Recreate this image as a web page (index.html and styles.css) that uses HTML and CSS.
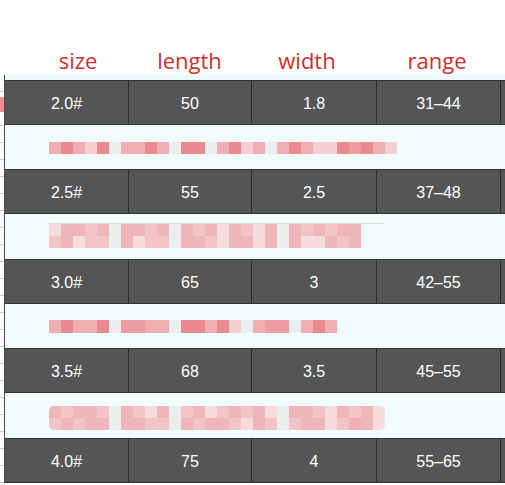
FILE: index.html
```html
<!DOCTYPE html>
<html>
<head>
<meta charset="utf-8">
<link rel="stylesheet" href="styles.css">
</head>
<body>
<div class="page">
  <div class="head">
    <span class="h h-size">size</span>
    <span class="h h-length">length</span>
    <span class="h h-width">width</span>
    <span class="h h-range">range</span>
  </div>
  <div class="body">
    <div class="gutter"><div class="mark"></div></div>
    <div class="table">
      <div class="strip"></div>
      <div class="row dark"><div class="cell">2.0#</div><div class="cell">50</div><div class="cell">1.8</div><div class="cell">31–44</div><div class="cell last"></div></div>
      <div class="row light l44">
        <div class="mos m1">
          <div class="line"><i class="a"></i><i class="b"></i><i class="a"></i><i class="c"></i><i class="b"></i><i class="g"></i><i class="a"></i><i class="a"></i><i class="b"></i><i class="a"></i><i class="g"></i><i class="b"></i><i class="b"></i><i class="g"></i><i class="a"></i><i class="b"></i><i class="c"></i><i class="a"></i><i class="g"></i><i class="a"></i><i class="b"></i><i class="a"></i><i class="c"></i><i class="c"></i><i class="b"></i><i class="d"></i><i class="b"></i><i class="a"></i><i class="c"></i></div>
        </div>
      </div>
      <div class="row dark"><div class="cell">2.5#</div><div class="cell">55</div><div class="cell">2.5</div><div class="cell">37–48</div><div class="cell last"></div></div>
      <div class="row light l45">
        <div class="mos m2">
          <div class="line"><i class="p3"></i><i class="p2"></i><i class="p2"></i><i class="p1"></i><i class="p2"></i><i class="g"></i><i class="p2"></i><i class="p2"></i><i class="p1"></i><i class="p2"></i><i class="g"></i><i class="p2"></i><i class="p1"></i><i class="p2"></i><i class="p3"></i><i class="p2"></i><i class="p1"></i><i class="p3"></i><i class="p2"></i><i class="g"></i><i class="p2"></i><i class="p1"></i><i class="p2"></i><i class="p1"></i><i class="p2"></i><i class="p2"></i></div>
          <div class="line"><i class="p1"></i><i class="p2"></i><i class="p3"></i><i class="p1"></i><i class="p1"></i><i class="g"></i><i class="p2"></i><i class="p3"></i><i class="p1"></i><i class="p1"></i><i class="g"></i><i class="p2"></i><i class="p2"></i><i class="p1"></i><i class="p3"></i><i class="p2"></i><i class="p2"></i><i class="p3"></i><i class="p2"></i><i class="g"></i><i class="p2"></i><i class="p3"></i><i class="p3"></i><i class="p2"></i><i class="p1"></i><i class="p2"></i></div>
        </div>
      </div>
      <div class="row dark"><div class="cell">3.0#</div><div class="cell">65</div><div class="cell">3</div><div class="cell">42–55</div><div class="cell last"></div></div>
      <div class="row light l44">
        <div class="mos m3">
          <div class="line"><i class="a"></i><i class="b"></i><i class="a"></i><i class="a"></i><i class="b"></i><i class="g"></i><i class="d"></i><i class="d"></i><i class="a"></i><i class="a"></i><i class="g"></i><i class="b"></i><i class="b"></i><i class="a"></i><i class="b"></i><i class="c"></i><i class="g"></i><i class="a"></i><i class="d"></i><i class="d"></i><i class="g"></i><i class="a"></i><i class="b"></i><i class="a"></i></div>
        </div>
      </div>
      <div class="row dark"><div class="cell">3.5#</div><div class="cell">68</div><div class="cell">3.5</div><div class="cell">45–55</div><div class="cell last"></div></div>
      <div class="row light l45">
        <div class="mos m4">
          <div class="line"><i class="p2"></i><i class="p1"></i><i class="p2"></i><i class="p2"></i><i class="p1"></i><i class="g"></i><i class="p2"></i><i class="p1"></i><i class="p3"></i><i class="p2"></i><i class="g"></i><i class="p1"></i><i class="p2"></i><i class="p3"></i><i class="p1"></i><i class="p2"></i><i class="p1"></i><i class="p2"></i><i class="p3"></i><i class="g"></i><i class="p2"></i><i class="p2"></i><i class="p1"></i><i class="p3"></i><i class="p2"></i><i class="p1"></i><i class="p2"></i><i class="p3"></i></div>
          <div class="line"><i class="p1"></i><i class="p2"></i><i class="p1"></i><i class="p2"></i><i class="p2"></i><i class="g"></i><i class="p2"></i><i class="p2"></i><i class="p1"></i><i class="p1"></i><i class="g"></i><i class="p2"></i><i class="p1"></i><i class="p2"></i><i class="p2"></i><i class="p1"></i><i class="p3"></i><i class="p2"></i><i class="p1"></i><i class="g"></i><i class="p1"></i><i class="p2"></i><i class="p2"></i><i class="p3"></i><i class="p1"></i><i class="a"></i><i class="p2"></i><i class="p3"></i></div>
        </div>
      </div>
      <div class="row dark"><div class="cell">4.0#</div><div class="cell">75</div><div class="cell">4</div><div class="cell">55–65</div><div class="cell last"></div></div>
    </div>
  </div>
</div>
</body>
</html>
```
FILE: styles.css
```css
html, body {
  margin: 0;
  padding: 0;
  background: #ffffff;
}
.page {
  width: 505px;
  height: 485px;
  overflow: hidden;
}
.head {
  height: 75px;
  box-sizing: border-box;
  padding: 45px 0 0 5px;
  display: grid;
  grid-template-columns: 124px 123px 125px 124px 1fr;
  font-family: "Open Sans", "Liberation Sans", sans-serif;
  font-size: 22px;
  line-height: 30px;
  color: #c8322b;
}
.h {
  text-align: center;
}
.h-size { padding-left: 22px; }
.h-length { padding-right: 2px; }
.h-width { padding-right: 15px; }
.h-range { padding-right: 4px; }

.body {
  display: flex;
}
.gutter {
  width: 4px;
  flex: none;
  background: repeating-linear-gradient(to bottom, transparent 0 16px, #c9cccc 16px 17px);
  display: flex;
  flex-direction: column;
}
.mark {
  margin-top: 22px;
  height: 15px;
  background: #ef8d92;
}
.table {
  flex: 1;
  border-left: 1px solid #4a4a4a;
}
.strip {
  height: 5px;
  background: #eef9f9;
}
.row {
  box-sizing: border-box;
}
.dark {
  height: 45px;
  background: #555555;
  border-top: 1px solid #333333;
  border-bottom: 1px solid #333333;
  display: grid;
  grid-template-columns: 124px 123px 125px 124px 1fr;
}
.cell {
  border-right: 1px solid #2e2e2e;
  display: flex;
  align-items: center;
  justify-content: center;
  color: #ffffff;
  font-family: "Liberation Sans", Arial, sans-serif;
  font-size: 16px;
  padding-top: 3px;
}
.cell.last {
  border-right: none;
}
.light {
  background: #f1fcfc;
  display: flex;
  align-items: center;
  padding-left: 44px;
}
.l44 { height: 44px; }
.l45 { height: 45px; }

.mos {
  display: flex;
  flex-direction: column;
  filter: blur(0.6px);
}
.line {
  display: flex;
}
.line i {
  display: block;
  width: 12px;
  height: 12px;
}
.m3 .line i { height: 13px; }
.m1 { margin-top: 2px; }
.m2 {
  border-top: 1px solid #d9dfdf;
  width: 336px;
  margin-top: -2px;
}
.m4 {
  border-radius: 5px;
  overflow: hidden;
  margin-top: 5px;
}
.a { background: #f1aeb2; }
.b { background: #ea8a90; }
.c { background: #f5cfd1; }
.d { background: #ee9ca1; }
.g { background: #eaeeee; }
.p1 { background: #f3c4c6; }
.p2 { background: #efb6b9; }
.p3 { background: #f7dcdd; }
```
